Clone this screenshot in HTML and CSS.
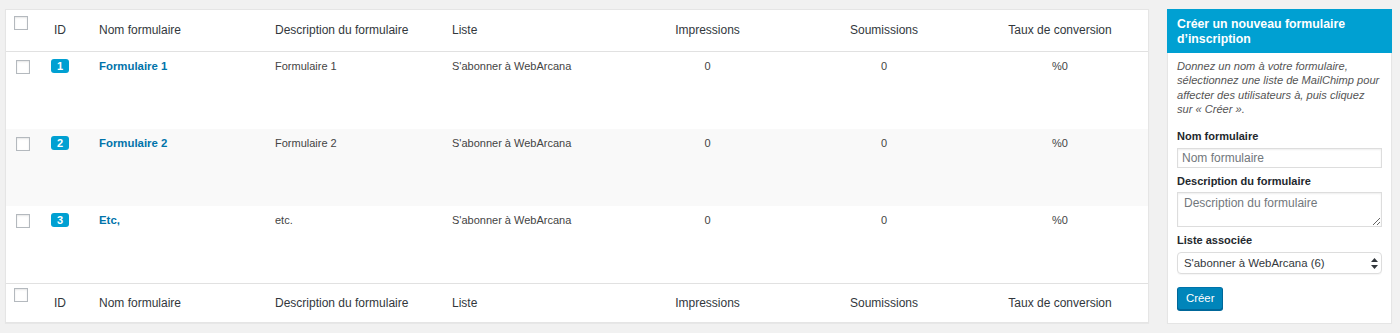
FILE: index.html
```html
<!DOCTYPE html>
<html lang="fr">
<head>
    <meta charset="UTF-8">
    <title>Formulaires d'inscription</title>
    <link rel="stylesheet" href="styles.css">
</head>
<body>
    <div class="wrap">
        <table class="forms-table">
            <colgroup>
                <col class="col-cb">
                <col class="col-id">
                <col class="col-name">
                <col class="col-desc">
                <col class="col-list">
                <col class="col-num">
                <col class="col-num2">
                <col class="col-num2">
            </colgroup>
            <thead>
                <tr>
                    <th class="check-column"><input type="checkbox" class="cb"></th>
                    <th class="center">ID</th>
                    <th class="name-head">Nom formulaire</th>
                    <th>Description du formulaire</th>
                    <th>Liste</th>
                    <th class="center">Impressions</th>
                    <th class="center">Soumissions</th>
                    <th class="center">Taux de conversion</th>
                </tr>
            </thead>
            <tbody>
                <tr>
                    <td class="check-column"><input type="checkbox" class="cb"></td>
                    <td><span class="badge">1</span></td>
                    <td class="name-cell"><a href="#" class="row-title">Formulaire 1</a></td>
                    <td>Formulaire 1</td>
                    <td>S'abonner à WebArcana</td>
                    <td class="center">0</td>
                    <td class="center">0</td>
                    <td class="center">%0</td>
                </tr>
                <tr class="alt">
                    <td class="check-column"><input type="checkbox" class="cb"></td>
                    <td><span class="badge">2</span></td>
                    <td class="name-cell"><a href="#" class="row-title">Formulaire 2</a></td>
                    <td>Formulaire 2</td>
                    <td>S'abonner à WebArcana</td>
                    <td class="center">0</td>
                    <td class="center">0</td>
                    <td class="center">%0</td>
                </tr>
                <tr>
                    <td class="check-column"><input type="checkbox" class="cb"></td>
                    <td><span class="badge">3</span></td>
                    <td class="name-cell"><a href="#" class="row-title">Etc,</a></td>
                    <td>etc.</td>
                    <td>S'abonner à WebArcana</td>
                    <td class="center">0</td>
                    <td class="center">0</td>
                    <td class="center">%0</td>
                </tr>
            </tbody>
            <tfoot>
                <tr>
                    <th class="check-column"><input type="checkbox" class="cb"></th>
                    <th class="center">ID</th>
                    <th class="name-head">Nom formulaire</th>
                    <th>Description du formulaire</th>
                    <th>Liste</th>
                    <th class="center">Impressions</th>
                    <th class="center">Soumissions</th>
                    <th class="center">Taux de conversion</th>
                </tr>
            </tfoot>
        </table>

        <div class="postbox">
            <h2 class="postbox-title">Créer un nouveau formulaire d’inscription</h2>
            <div class="postbox-body">
                <p class="description">Donnez un nom à votre formulaire, sélectionnez une liste de MailChimp pour affecter des utilisateurs à, puis cliquez sur «&nbsp;Créer&nbsp;».</p>
                <label class="field-label" for="form-name">Nom formulaire</label>
                <input type="text" id="form-name" class="text-input" placeholder="Nom formulaire">
                <label class="field-label spaced" for="form-desc">Description du formulaire</label>
                <textarea id="form-desc" class="text-area" placeholder="Description du formulaire"></textarea>
                <label class="field-label spaced" for="form-list">Liste associée</label>
                <div class="select-wrap">
                    <select id="form-list" class="select">
                        <option>S'abonner à WebArcana (6)</option>
                    </select>
                    <svg class="select-arrows" width="7" height="11" viewBox="0 0 7 11">
                        <path d="M3.5 0 L7 4 L0 4 Z" fill="#32373c"/>
                        <path d="M0 7 L7 7 L3.5 11 Z" fill="#32373c"/>
                    </svg>
                </div>
                <div class="actions">
                    <button class="button-primary">Créer</button>
                </div>
            </div>
        </div>
    </div>
</body>
</html>
```

FILE: styles.css
```css
body {
    margin: 0;
    background: #f1f1f1;
    font-family: "Liberation Sans", Arial, sans-serif;
    color: #555;
}

.wrap {
    display: flex;
    align-items: flex-start;
    gap: 18px;
    padding: 9px 0 0 5px;
}

/* list table */

.forms-table {
    width: 1144px;
    table-layout: fixed;
    border-collapse: separate;
    border-spacing: 0;
    border: 1px solid #e5e5e5;
    background: #fff;
    box-shadow: 0 1px 1px rgba(0, 0, 0, 0.04);
}

.col-cb { width: 34px; }
.col-id { width: 40px; }
.col-name { width: 185px; }
.col-desc { width: 177px; }
.col-list { width: 177px; }
.col-num { width: 177px; }
.col-num2 { width: 176px; }

.forms-table th {
    font-weight: normal;
    font-size: 12px;
    line-height: 18px;
    color: #32373c;
    text-align: left;
    vertical-align: top;
    white-space: nowrap;
}

.forms-table thead th {
    padding: 11px 10px 12px;
    border-bottom: 1px solid #e1e1e1;
}

.forms-table tfoot th {
    padding: 10px 10px 10px;
    border-top: 1px solid #e1e1e1;
}

.forms-table td {
    padding: 5px 10px;
    font-size: 11px;
    line-height: 18px;
    vertical-align: top;
    white-space: nowrap;
    color: #444;
}

.forms-table tbody tr {
    height: 77px;
}

.forms-table tr.alt {
    background: #f9f9f9;
}

.forms-table .center {
    text-align: center;
    padding-left: 0;
    padding-right: 0;
}

.forms-table .name-head,
.forms-table .name-cell {
    padding-left: 19px;
}

.forms-table thead th.check-column {
    padding: 6px 0 0 8px;
}

.forms-table tfoot th.check-column {
    padding: 4px 0 0 8px;
}

.forms-table td.check-column {
    padding: 8px 0 0 10px;
}

.cb {
    appearance: none;
    -webkit-appearance: none;
    display: block;
    width: 14px;
    height: 14px;
    margin: 0;
    border: 1px solid #b4b9be;
    background: #fff;
    box-shadow: inset 0 1px 2px rgba(0, 0, 0, 0.1);
    box-sizing: border-box;
}

.badge {
    display: block;
    width: 18px;
    height: 14px;
    margin: 2px auto 0;
    border-radius: 3px;
    background: #00a0d2;
    color: #fff;
    font-size: 11px;
    font-weight: bold;
    line-height: 14px;
    text-align: center;
}

.row-title {
    color: #0073aa;
    font-size: 11.4px;
    font-weight: bold;
    text-decoration: none;
}

/* side box */

.postbox {
    width: 225px;
    box-sizing: border-box;
    border: 1px solid #e5e5e5;
    background: #fff;
    box-shadow: 0 1px 1px rgba(0, 0, 0, 0.04);
}

.postbox-title {
    margin: -1px -1px 0;
    padding: 8px 10px 6px;
    background: #00a0d2;
    color: #fff;
    font-size: 12.3px;
    font-weight: bold;
    line-height: 15px;
}

.postbox-body {
    display: flex;
    flex-direction: column;
    align-items: flex-start;
    padding: 6px 9px 13px;
}

.description {
    margin: 0 0 11px;
    font-size: 11.1px;
    font-style: italic;
    line-height: 14.4px;
    color: #555;
}

.field-label {
    font-size: 11px;
    font-weight: bold;
    line-height: 16px;
    color: #23282d;
    margin-bottom: 4px;
}

.field-label.spaced {
    margin-top: 5px;
}

.text-input,
.text-area {
    width: 100%;
    box-sizing: border-box;
    margin: 0;
    border: 1px solid #ddd;
    box-shadow: inset 0 1px 2px rgba(0, 0, 0, 0.07);
    font-family: "Liberation Sans", Arial, sans-serif;
    font-size: 12px;
    color: #32373c;
    background: #fff;
}

.text-input {
    height: 20px;
    padding: 0 4px;
}

.text-area {
    height: 35px;
    padding: 2px 6px;
    line-height: 16px;
    margin-top: -1px;
}

.text-input::placeholder,
.text-area::placeholder {
    color: #72777c;
}

.select-wrap {
    position: relative;
    width: 100%;
}

.select {
    appearance: none;
    -webkit-appearance: none;
    display: block;
    width: 100%;
    height: 22px;
    margin: 0;
    padding: 0 20px 0 6px;
    border: 1px solid #ddd;
    border-radius: 4px;
    background: #fff;
    box-shadow: 0 1px 1px rgba(0, 0, 0, 0.04);
    font-family: "Liberation Sans", Arial, sans-serif;
    font-size: 11.4px;
    color: #32373c;
}

.select-arrows {
    position: absolute;
    right: 4px;
    top: 6px;
}

.actions {
    margin-top: 13px;
}

.button-primary {
    height: 23px;
    padding: 0 8px;
    border: 1px solid #0073aa;
    border-color: #0073aa #006799 #006799;
    border-radius: 3px;
    background: #0085ba;
    box-shadow: 0 1px 0 #006799;
    color: #fff;
    font-family: "Liberation Sans", Arial, sans-serif;
    font-size: 11.4px;
    line-height: 21px;
}
```
